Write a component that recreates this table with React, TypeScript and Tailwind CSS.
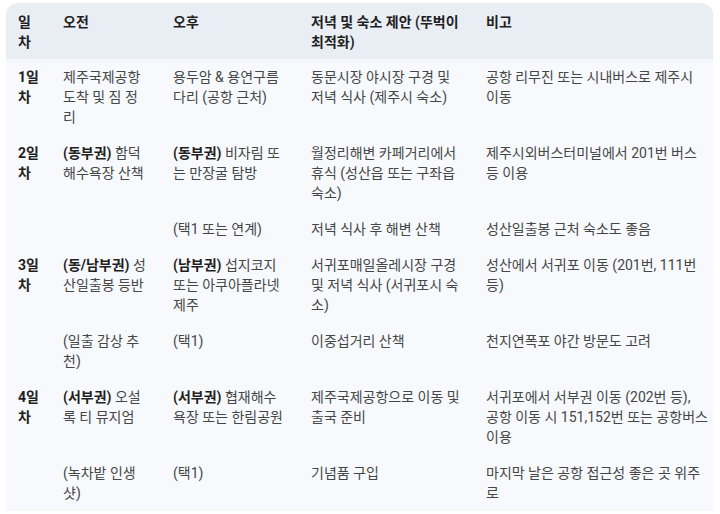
import React from "react";

type Cell = { bold?: string; text?: string; keep?: boolean };

const rows: { day?: string; cells: Cell[] }[] = [
  {
    day: "1일 차",
    cells: [
      { text: "제주국제공항 도착 및 짐 정리" },
      { text: "용두암 & 용연구름다리 (공항 근처)" },
      { text: "동문시장 야시장 구경 및 저녁 식사 (제주시 숙소)" },
      { text: "공항 리무진 또는 시내버스로 제주시 이동" },
    ],
  },
  {
    day: "2일 차",
    cells: [
      { bold: "(동부권)", text: " 함덕 해수욕장 산책" },
      { bold: "(동부권)", text: " 비자림 또는 만장굴 탐방" },
      { text: "월정리해변 카페거리에서 휴식 (성산읍 또는 구좌읍 숙소)" },
      { text: "제주시외버스터미널에서 201번 버스 등 이용" },
    ],
  },
  {
    cells: [
      {},
      { text: "(택1 또는 연계)" },
      { text: "저녁 식사 후 해변 산책" },
      { text: "성산일출봉 근처 숙소도 좋음" },
    ],
  },
  {
    day: "3일 차",
    cells: [
      { bold: "(동/남부권)", text: " 성산일출봉 등반" },
      { bold: "(남부권)", text: " 섭지코지 또는 아쿠아플라넷 제주" },
      { text: "서귀포매일올레시장 구경 및 저녁 식사 (서귀포시 숙소)" },
      { text: "성산에서 서귀포 이동 (201번, 111번 등)" },
    ],
  },
  {
    cells: [
      { text: "(일출 감상 추천)" },
      { text: "(택1)" },
      { text: "이중섭거리 산책" },
      { text: "천지연폭포 야간 방문도 고려" },
    ],
  },
  {
    day: "4일 차",
    cells: [
      { bold: "(서부권)", text: " 오설록 티 뮤지엄" },
      { bold: "(서부권)", text: " 협재해수욕장 또는 한림공원" },
      { text: "제주국제공항으로 이동 및 출국 준비" },
      { text: "서귀포에서 서부권 이동 (202번 등), 공항 이동 시 151,152번 또는 공항버스 이용", keep: true },
    ],
  },
  {
    cells: [
      { text: "(녹차밭 인생샷)" },
      { text: "(택1)" },
      { text: "기념품 구입" },
      { text: "마지막 날은 공항 접근성 좋은 곳 위주로" },
    ],
  },
];

const headers = ["일차", "오전", "오후", "저녁 및 숙소 제안 (뚜벅이 최적화)", "비고"];

export default function App() {
  return (
    <div className="min-h-screen bg-white pt-[3px] pl-[6px] pr-[7px] font-['Roboto','Noto_Sans_CJK_KR',sans-serif] text-[14px] leading-5">
      <div className="overflow-hidden rounded-t-xl bg-[#f8f9fc]">
        <table className="w-full table-fixed border-collapse text-left">
          <colgroup>
            <col className="w-[45px]" />
            <col className="w-[110px]" />
            <col className="w-[138px]" />
            <col className="w-[175px]" />
            <col />
          </colgroup>
          <thead className="bg-[#e9edf4]">
            <tr>
              {headers.map((h, i) => (
                <th
                  key={i}
                  className={`px-3 pt-[9px] pb-[7px] align-top font-semibold text-[#1f1f1f] ${i === 4 ? "pr-1" : ""}`}
                >
                  {h}
                </th>
              ))}
            </tr>
          </thead>
          <tbody className="text-[#444746]">
            {rows.map((row, r) => (
              <tr key={r}>
                <td className="px-3 py-2 align-top font-bold text-[#1f1f1f]">{row.day}</td>
                {row.cells.map((c, i) => (
                  <td
                    key={i}
                    className={`px-3 py-2 align-top ${i === 3 ? "pr-1" : ""} ${c.keep ? "break-keep" : ""}`}
                  >
                    {c.bold && <span className="font-bold text-[#1f1f1f]">{c.bold}</span>}
                    {c.text}
                  </td>
                ))}
              </tr>
            ))}
          </tbody>
        </table>
      </div>
    </div>
  );
}
